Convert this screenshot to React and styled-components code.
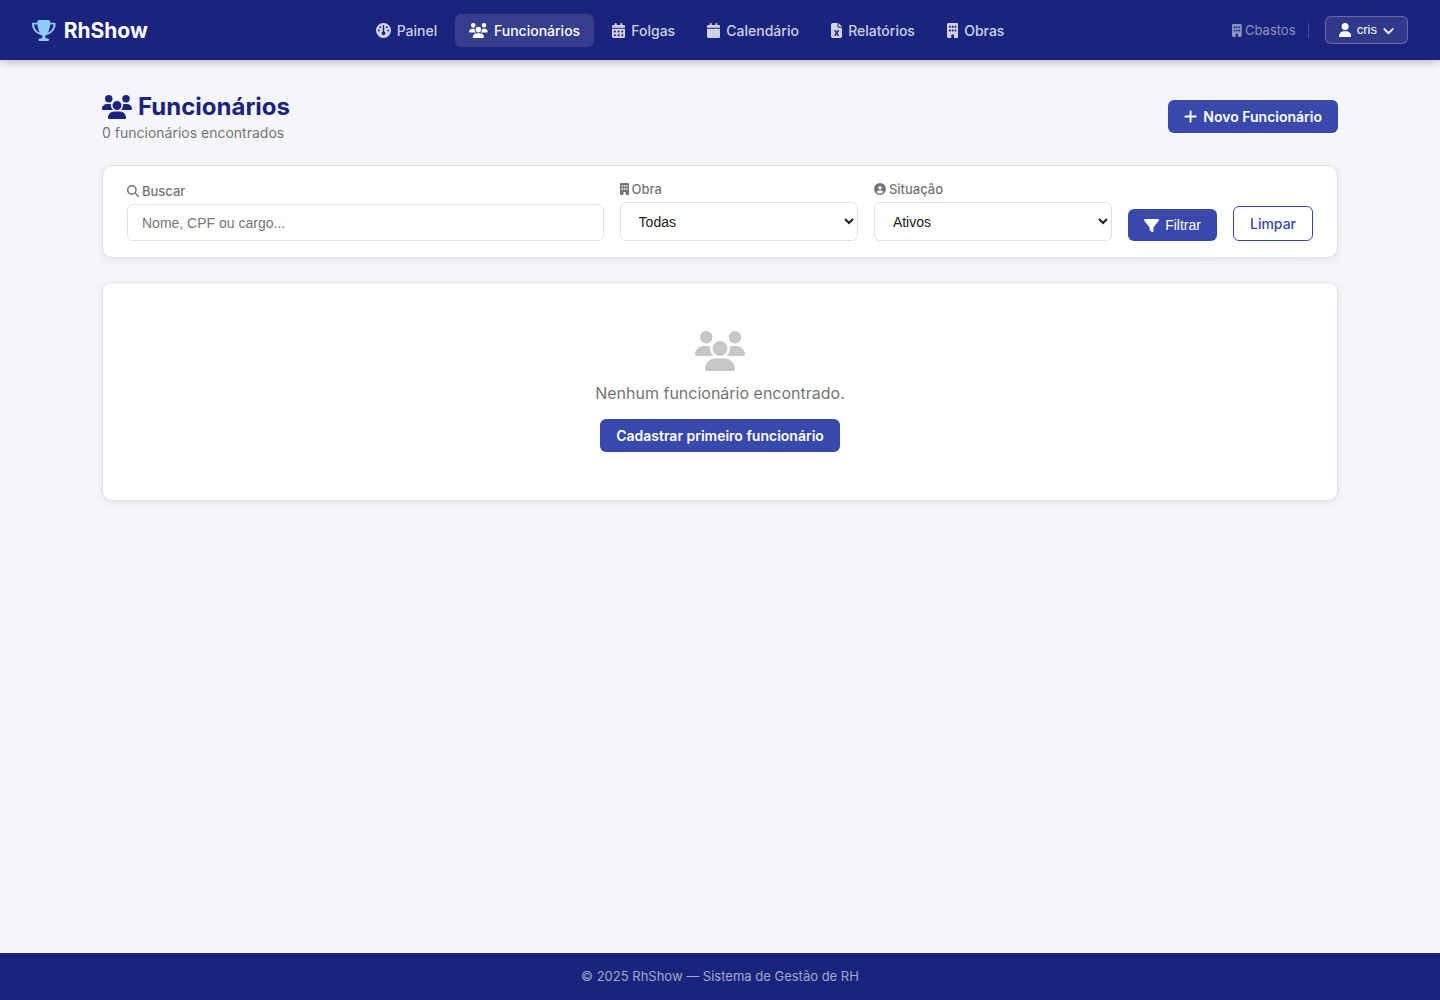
import React from "react";
import styled, { createGlobalStyle, css } from "styled-components";
import {
  FaTrophy,
  FaGauge,
  FaUsers,
  FaCalendarDays,
  FaCalendar,
  FaFileExcel,
  FaBuilding,
  FaUser,
  FaChevronDown,
  FaPlus,
  FaMagnifyingGlass,
  FaCircleUser,
  FaFilter,
} from "react-icons/fa6";

const color = {
  navy: "#1a237e",
  indigo: "#3949ab",
  sky: "#90caf9",
  page: "#f4f6fa",
  line: "#e0e0e0",
  muted: "#757575",
  text: "#212121",
};

// Icons are one em high and as wide as their own view box.
const GlobalStyle = createGlobalStyle`
  *, *::before, *::after { box-sizing: border-box; margin: 0; padding: 0; }
  body {
    font-family: Inter, "Liberation Sans", sans-serif;
    background: ${color.page};
    color: ${color.text};
  }
  svg { flex-shrink: 0; height: 1em; width: 1em; }
  svg[viewBox="0 0 384 512"] { width: 0.75em; }
  svg[viewBox="0 0 448 512"] { width: 0.875em; }
  svg[viewBox="0 0 576 512"] { width: 1.125em; }
  svg[viewBox="0 0 640 512"] { width: 1.25em; }
`;

const Page = styled.div`
  min-height: 100vh;
  display: flex;
  flex-direction: column;
`;

const Header = styled.header`
  display: flex;
  align-items: center;
  justify-content: space-between;
  height: 60px;
  padding: 0 32px;
  background: ${color.navy};
  box-shadow: 0 2px 8px rgba(0, 0, 0, 0.25);
`;

const Brand = styled.a`
  display: flex;
  align-items: center;
  gap: 8px;
  color: #fff;
  font-size: 21px;
  font-weight: 700;
  text-decoration: none;

  svg {
    color: ${color.sky};
  }
`;

const Nav = styled.nav`
  display: flex;
  gap: 4px;
`;

const NavLink = styled.a`
  display: flex;
  align-items: center;
  gap: 6px;
  padding: 8px 14px;
  border-radius: 6px;
  font-size: 14px;
  font-weight: 500;
  line-height: 17px;
  text-decoration: none;
  color: ${(p) => (p.$active ? "#fff" : "rgba(255, 255, 255, 0.8)")};
  background: ${(p) => (p.$active ? "rgba(255, 255, 255, 0.12)" : "transparent")};

  svg {
    font-size: 15px;
  }
`;

const Account = styled.div`
  display: flex;
  align-items: center;
  gap: 16px;
`;

const Company = styled.span`
  display: flex;
  align-items: center;
  gap: 3px;
  padding-right: 12px;
  border-right: 1px solid rgba(255, 255, 255, 0.2);
  color: rgba(255, 255, 255, 0.5);
  font-size: 13px;
  line-height: 15px;
`;

const UserButton = styled.button`
  display: flex;
  align-items: center;
  gap: 6px;
  padding: 6px 13px;
  border: 1px solid rgba(255, 255, 255, 0.25);
  border-radius: 6px;
  background: rgba(255, 255, 255, 0.1);
  color: #fff;
  font-family: "Liberation Sans", Arial, sans-serif;
  font-size: 13px;
  line-height: 14px;

  svg {
    font-size: 14px;
  }
`;

const Caret = styled(FaChevronDown)`
  && {
    font-size: 11px;
    stroke-width: 32px;
  }
`;

const Main = styled.main`
  flex: 1;
  width: 100%;
  max-width: 1300px;
  margin: 0 auto;
  padding: 32px;
`;

const PageHeader = styled.div`
  display: flex;
  align-items: center;
  justify-content: space-between;
  margin-bottom: 24px;
`;

const Title = styled.h1`
  display: flex;
  align-items: center;
  gap: 6px;
  color: ${color.navy};
  font-size: 24px;
  font-weight: 700;
  line-height: 29px;
`;

const Subtitle = styled.p`
  margin-top: 4px;
  color: ${color.muted};
  font-size: 14px;
  line-height: 16px;
`;

const buttonStyle = css`
  display: inline-flex;
  align-items: center;
  gap: 6px;
  padding: 8px 16px;
  border: 0;
  border-radius: 6px;
  background: ${color.indigo};
  color: #fff;
  font-size: 14px;
  font-weight: 600;
  line-height: 17px;
  text-decoration: none;

  svg {
    font-size: 15px;
  }
`;

const ButtonLink = styled.a`
  ${buttonStyle}
`;

const OutlineLink = styled.a`
  ${buttonStyle}
  border: 1px solid ${color.indigo};
  background: transparent;
  color: ${color.indigo};
  font-weight: 500;
`;

const SubmitButton = styled.button`
  ${buttonStyle}
  font-family: "Liberation Sans", Arial, sans-serif;
  font-weight: 400;
  line-height: 16px;
`;

const Card = styled.section`
  border: 1px solid ${color.line};
  border-radius: 10px;
  background: #fff;
  box-shadow: 0 2px 8px rgba(0, 0, 0, 0.08);
`;

const Filters = styled(Card).attrs({ as: "form" })`
  display: flex;
  align-items: flex-end;
  gap: 16px;
  margin-bottom: 24px;
  padding: 16px 24px;
`;

const Field = styled.div`
  display: flex;
  flex-direction: column;
  gap: 6px;
  flex: ${(p) => p.$grow} 1 0;
  min-width: 0;
`;

const Label = styled.label`
  display: flex;
  align-items: center;
  gap: 3px;
  color: ${color.muted};
  font-size: 13px;
  font-weight: 500;
  line-height: 14px;

  svg {
    font-size: 12px;
  }
`;

const controlStyle = css`
  width: 100%;
  border: 1px solid ${color.line};
  border-radius: 6px;
  background: #fff;
  color: ${color.text};
  font-family: "Liberation Sans", Arial, sans-serif;
  font-size: 14px;
`;

const TextInput = styled.input`
  ${controlStyle}
  height: 37px;
  padding: 0 14px;

  &::placeholder {
    color: ${color.muted};
  }
`;

const Select = styled.select`
  ${controlStyle}
  height: 39px;
  padding: 0 0 0 14px;
`;

const EmptyState = styled(Card)`
  display: flex;
  flex-direction: column;
  align-items: center;
  padding: 48px 24px;
`;

const EmptyIcon = styled(FaUsers)`
  color: #c7c7c7;
  font-size: 40px;
`;

const EmptyText = styled.p`
  margin: 12px 0 16px;
  color: ${color.muted};
  font-size: 16px;
  line-height: 20px;
`;

const Footer = styled.footer`
  padding: 16px;
  background: ${color.navy};
  color: rgba(255, 255, 255, 0.6);
  font-size: 13px;
  line-height: 15px;
  text-align: center;
`;

const links = [
  { label: "Painel", Icon: FaGauge },
  { label: "Funcionários", Icon: FaUsers, active: true },
  { label: "Folgas", Icon: FaCalendarDays },
  { label: "Calendário", Icon: FaCalendar },
  { label: "Relatórios", Icon: FaFileExcel },
  { label: "Obras", Icon: FaBuilding },
];

export default function App() {
  return (
    <Page>
      <GlobalStyle />
      <Header>
        <Brand href="#">
          <FaTrophy />
          RhShow
        </Brand>
        <Nav>
          {links.map(({ label, Icon, active }) => (
            <NavLink key={label} href="#" $active={active}>
              <Icon />
              {label}
            </NavLink>
          ))}
        </Nav>
        <Account>
          <Company>
            <FaBuilding />
            Cbastos
          </Company>
          <UserButton type="button">
            <FaUser />
            cris
            <Caret />
          </UserButton>
        </Account>
      </Header>

      <Main>
        <PageHeader>
          <div>
            <Title>
              <FaUsers />
              Funcionários
            </Title>
            <Subtitle>0 funcionários encontrados</Subtitle>
          </div>
          <ButtonLink href="#">
            <FaPlus />
            Novo Funcionário
          </ButtonLink>
        </PageHeader>

        <Filters>
          <Field $grow={2}>
            <Label htmlFor="busca">
              <FaMagnifyingGlass />
              Buscar
            </Label>
            <TextInput id="busca" type="text" placeholder="Nome, CPF ou cargo..." />
          </Field>
          <Field $grow={1}>
            <Label htmlFor="obra">
              <FaBuilding />
              Obra
            </Label>
            <Select id="obra">
              <option>Todas</option>
            </Select>
          </Field>
          <Field $grow={1}>
            <Label htmlFor="situacao">
              <FaCircleUser />
              Situação
            </Label>
            <Select id="situacao">
              <option>Ativos</option>
            </Select>
          </Field>
          <SubmitButton type="submit">
            <FaFilter />
            Filtrar
          </SubmitButton>
          <OutlineLink href="#">Limpar</OutlineLink>
        </Filters>

        <EmptyState>
          <EmptyIcon />
          <EmptyText>Nenhum funcionário encontrado.</EmptyText>
          <ButtonLink href="#">Cadastrar primeiro funcionário</ButtonLink>
        </EmptyState>
      </Main>

      <Footer>© 2025 RhShow — Sistema de Gestão de RH</Footer>
    </Page>
  );
}
